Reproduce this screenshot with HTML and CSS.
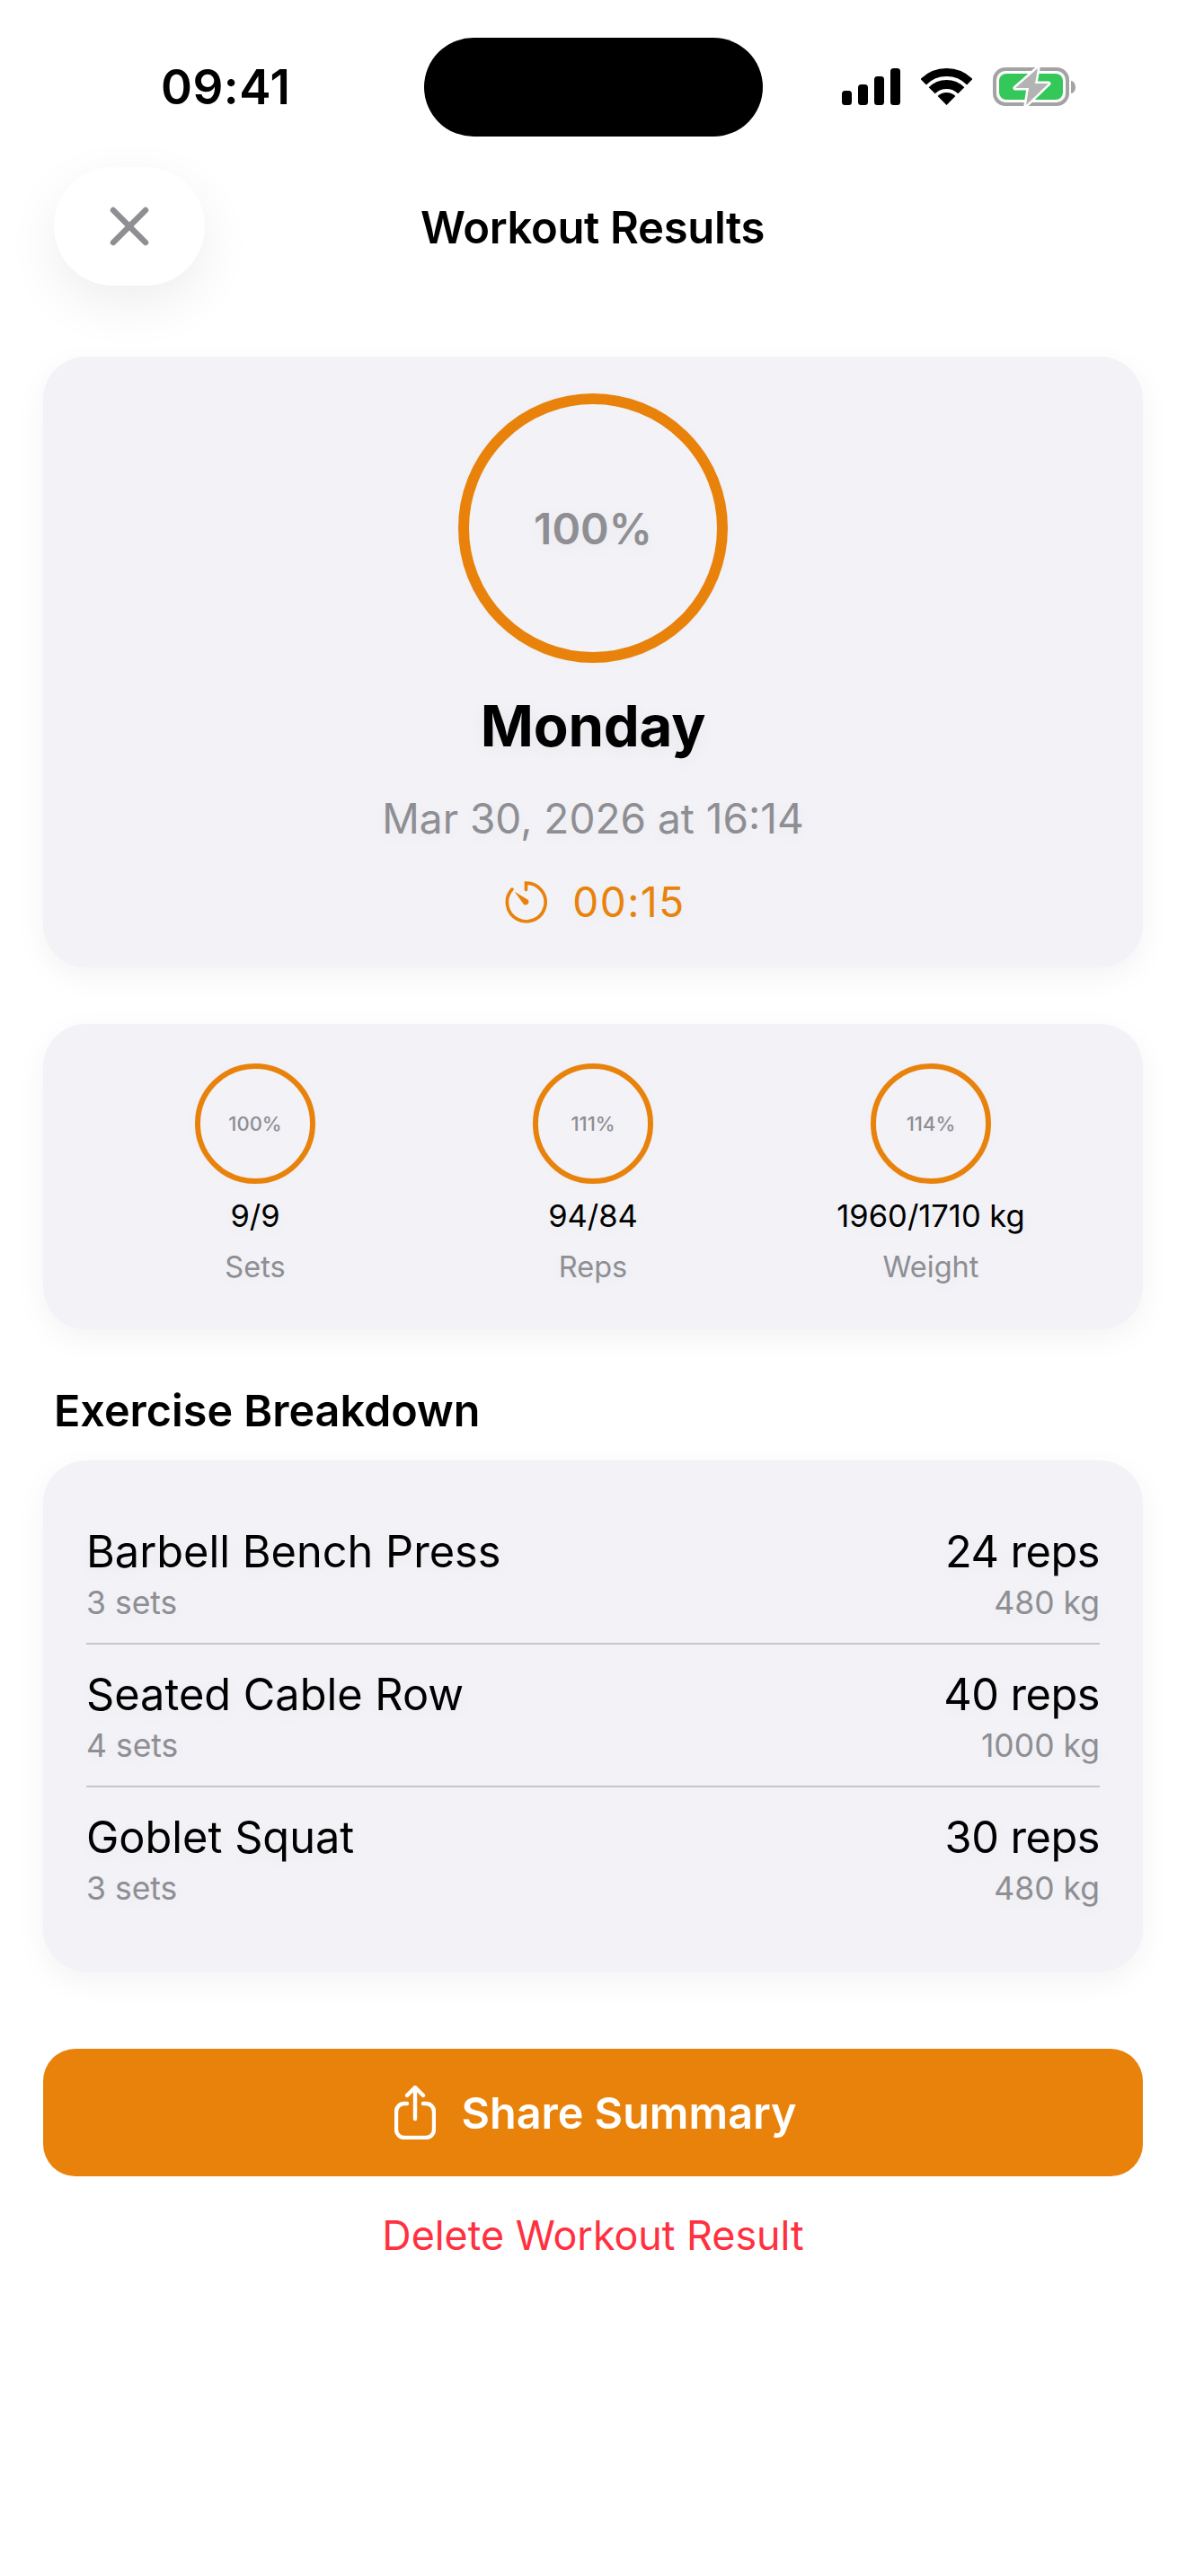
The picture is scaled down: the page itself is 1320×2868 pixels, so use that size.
FILE: index.html
```html
<!DOCTYPE html>
<html lang="en">
<head>
<meta charset="utf-8">
<title>Workout Results</title>
<link rel="stylesheet" href="styles.css">
</head>
<body>
<div class="page">
  <header class="status">
    <span class="time">09:41</span>
    <div class="island"></div>
    <div class="status-icons">
      <svg class="i-signal" viewBox="0 0 65 41"><rect x="0" y="25" width="11" height="16" rx="3.5"/><rect x="18" y="18" width="11" height="23" rx="3.5"/><rect x="36" y="9" width="11" height="32" rx="3.5"/><rect x="54" y="0" width="11" height="41" rx="3.5"/></svg>
      <svg class="i-wifi" viewBox="0 0 57 42"><path class="wifi-arc w1" d="M2.7 16.2A36.5 36.5 0 0 1 54.3 16.2"/><path class="wifi-arc w2" d="M12.2 25.7A23 23 0 0 1 44.8 25.7"/><path d="M28.5 42L18.6 32.1A14 14 0 0 1 38.4 32.1Z"/></svg>
      <svg class="i-batt" viewBox="0 0 92 43"><rect class="b-shell" x="2" y="2" width="81" height="39" rx="12"/><rect class="b-fill" x="7" y="7" width="71" height="29" rx="8"/><path class="b-nub" d="M87 15a5 7 0 0 1 5 7a5 7 0 0 1-5 7Z"/><path class="b-bolt" d="M50 1L25 23H40L37 42L62 18H47Z"/></svg>
    </div>
  </header>

  <nav class="nav">
    <button class="close" aria-label="Close">
      <svg class="i-x" viewBox="0 0 44 44"><path d="M4 4L40 40M40 4L4 40"/></svg>
    </button>
    <h1 class="nav-title">Workout Results</h1>
  </nav>

  <section class="card hero">
    <div class="ring ring-lg"><span>100%</span></div>
    <h2 class="day">Monday</h2>
    <p class="date">Mar 30, 2026 at 16:14</p>
    <div class="duration">
      <svg class="i-timer" viewBox="0 0 44 44"><path class="t-line" d="M22 9V2A20 20 0 1 1 7.5 8.5"/><path class="t-hand" d="M10 11L24 19.5A3.2 3.2 0 0 1 19.5 24Z"/></svg>
      <span>00:15</span>
    </div>
  </section>

  <section class="card stats">
    <div class="stat"><div class="ring ring-sm"><span>100%</span></div><div class="stat-val">9/9</div><div class="stat-lab">Sets</div></div>
    <div class="stat"><div class="ring ring-sm"><span>111%</span></div><div class="stat-val">94/84</div><div class="stat-lab">Reps</div></div>
    <div class="stat"><div class="ring ring-sm"><span>114%</span></div><div class="stat-val">1960/1710 kg</div><div class="stat-lab">Weight</div></div>
  </section>

  <h3 class="sec-title">Exercise Breakdown</h3>

  <section class="card list">
    <div class="row">
      <div class="col"><div class="r-main">Barbell Bench Press</div><div class="r-sub">3 sets</div></div>
      <div class="col end"><div class="r-main">24 reps</div><div class="r-sub">480 kg</div></div>
    </div>
    <div class="row">
      <div class="col"><div class="r-main">Seated Cable Row</div><div class="r-sub">4 sets</div></div>
      <div class="col end"><div class="r-main">40 reps</div><div class="r-sub">1000 kg</div></div>
    </div>
    <div class="row">
      <div class="col"><div class="r-main">Goblet Squat</div><div class="r-sub">3 sets</div></div>
      <div class="col end"><div class="r-main">30 reps</div><div class="r-sub">480 kg</div></div>
    </div>
  </section>

  <button class="share">
    <svg class="i-share" viewBox="0 0 46 60"><path d="M23 2V37M14 11L23 2L32 11M14 20H11A9 9 0 0 0 2 29V49A9 9 0 0 0 11 58H35A9 9 0 0 0 44 49V29A9 9 0 0 0 35 20H32"/></svg>
    <span>Share Summary</span>
  </button>
  <button class="delete">Delete Workout Result</button>
</div>
</body>
</html>
```

FILE: styles.css
```css
* { box-sizing: border-box; margin: 0; padding: 0; }
html, body { background: #fff; }
body { font-family: Inter, "Liberation Sans", sans-serif; color: #000; }
button { font-family: inherit; border: 0; background: none; }

.page { width: 1320px; height: 2868px; overflow: hidden; display: flex; flex-direction: column; }

.status { display: grid; grid-template-columns: 472px 377px 471px; height: 152px; padding-top: 42px; }
.time { margin-left: 179px; font-size: 53px; font-weight: 600; line-height: 110px; height: 110px; letter-spacing: .5px; }
.island { height: 110px; background: #000; border-radius: 55px; }
.status-icons { display: flex; align-items: flex-start; margin-left: 88px; padding-top: 33px; }
.i-signal { width: 65px; height: 41px; margin-top: 1px; }
.i-wifi { width: 57px; height: 42px; margin-left: 23px; }
.wifi-arc { fill: none; stroke: #000; }
.w1 { stroke-width: 9; }
.w2 { stroke-width: 10; }
.i-batt { width: 92px; height: 43px; margin-left: 23px; }
.b-shell { fill: #fff; stroke: #a3a3a3; stroke-width: 4; }
.b-fill { fill: #34c759; }
.b-nub { fill: #a3a3a3; }
.b-bolt { fill: #b3b3b3; stroke: #fff; stroke-width: 5; paint-order: stroke; stroke-linejoin: round; }

.nav { display: flex; align-items: center; height: 131px; margin-top: 34px; padding-left: 60px; }
.close { width: 168px; height: 132px; border-radius: 66px; background: #fff; display: flex; align-items: center; justify-content: center; box-shadow: 0 20px 60px rgba(0,0,0,.07); flex: none; }
.i-x { width: 44px; height: 44px; fill: none; stroke: #8e8e93; stroke-width: 6.5; stroke-linecap: round; }
.nav-title { font-size: 49px; font-weight: 600; margin-left: 240px; padding-top: 3px; letter-spacing: -.35px; }

.card { margin: 0 48px; background: #f2f2f7; border-radius: 48px; box-shadow: 0 10px 34px rgba(0,0,0,.05); text-shadow: 0 4px 20px rgba(0,0,0,.05); }

.hero { margin-top: 80px; height: 680px; padding-top: 41px; display: flex; flex-direction: column; align-items: center; }
.ring { border-radius: 50%; border-style: solid; border-color: #e9820b; display: flex; align-items: center; justify-content: center; color: #8e8e93; box-shadow: 0 0 16px rgba(0,0,0,.02); }
.ring-lg { width: 300px; height: 300px; border-width: 12px; font-size: 48px; font-weight: 600; flex: none; }
.day { font-size: 63.5px; font-weight: 700; line-height: 76px; margin-top: 32px; letter-spacing: -.2px; }
.date { font-size: 46px; color: #8e8e93; line-height: 56px; margin-top: 37px; }
.duration { display: flex; align-items: center; margin-top: 37px; color: #e9820b; font-size: 46px; line-height: 56px; letter-spacing: 1.5px; }
.i-timer { width: 47px; height: 47px; margin-right: 28px; margin-left: 5px; }
.t-line { fill: none; stroke: #e9820b; stroke-width: 3.4; stroke-linecap: round; }
.t-hand { fill: #e9820b; }

.stats { margin-top: 63px; height: 340px; padding-top: 44px; display: grid; grid-template-columns: repeat(3, 376px); justify-content: center; }
.stat { display: flex; flex-direction: column; align-items: center; }
.ring-sm { width: 134px; height: 134px; border-width: 6px; font-size: 22px; font-weight: 500; flex: none; }
.stat-val { font-size: 34.5px; line-height: 40px; margin-top: 16px; }
.stat-lab { font-size: 32.5px; line-height: 38px; margin-top: 18px; color: #8e8e93; }

.sec-title { font-size: 48.5px; font-weight: 600; line-height: 60px; margin: 61px 0 0 60px; }

.list { margin-top: 25px; height: 569px; padding: 46px 48px 0; }
.row { display: flex; justify-content: space-between; height: 159px; padding-top: 27px; border-bottom: 2px solid #c6c6cc; }
.row:last-child { border-bottom: 0; }
.col { display: flex; flex-direction: column; }
.col.end { align-items: flex-end; }
.r-main { font-size: 48.7px; line-height: 58px; font-weight: 430; }
.col.end .r-main { letter-spacing: -.5px; }
.r-sub { font-size: 35.5px; line-height: 42px; margin-top: 7px; color: #8e8e93; }

.share { margin: 86px 48px 0; height: 142px; border-radius: 36px; background: #e9820b; color: #fff; display: flex; align-items: center; justify-content: center; font-size: 48.5px; font-weight: 600; flex: none; padding-left: 6px; }
.i-share { width: 46px; height: 60px; fill: none; stroke: #fff; stroke-width: 4.4; stroke-linecap: round; stroke-linejoin: round; margin-right: 28px; }
.delete { margin-top: 38px; height: 56px; text-align: center; color: #ff3040; font-size: 44.8px; line-height: 56px; }
```
